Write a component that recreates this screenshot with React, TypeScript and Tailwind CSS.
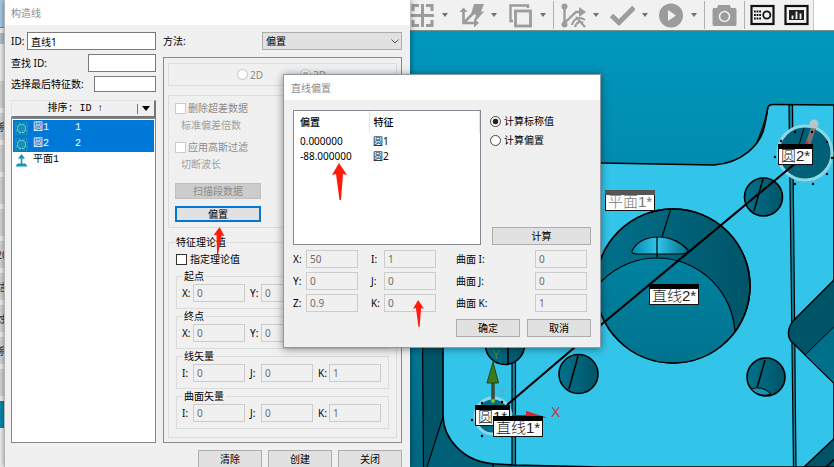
import { useState } from "react";
import type { ReactNode } from "react";

const INPUT =
  "min-w-0 border border-[#7a7a7a] bg-white px-[3px] text-black outline-none";
const DISABLED_INPUT =
  "h-[18px] w-full min-w-0 flex-1 border border-[#cccccc] bg-[#f0f0f0] px-[3px] text-[#6d6d6d] outline-none";
const BUTTON =
  "flex h-[18px] items-center justify-center border border-[#adadad] bg-[#e1e1e1]";
const RADIO =
  "size-[11px] shrink-0 appearance-none rounded-full border border-[#444444] bg-white checked:bg-[radial-gradient(circle,#222222_40%,#ffffff_50%)] disabled:border-[#c4c4c4] disabled:checked:bg-[radial-gradient(circle,#c0c0c0_40%,#ffffff_50%)]";
const CHECKBOX =
  "size-[11px] shrink-0 appearance-none border border-[#333333] bg-white checked:bg-[#0078d7] disabled:border-[#cccccc]";

interface FieldProps {
  id: string;
  label: string;
  value: string;
}

function AxisField({ id, label, value }: FieldProps) {
  return (
    <div className="flex min-w-0 flex-1 items-center">
      <label htmlFor={id} className="w-[11px] shrink-0">
        {label}
      </label>
      <input id={id} className={DISABLED_INPUT} defaultValue={value} disabled />
    </div>
  );
}

interface VectorGroupProps {
  name: string;
  title: string;
  fields: [string, string][];
}

function VectorGroup({ name, title, fields }: VectorGroupProps) {
  return (
    <fieldset className="min-w-0 border border-[#dcdcdc] pt-px pr-[7px] pb-[6px] pl-[5px]">
      <legend className="h-[14px] px-[2px]">{title}</legend>
      <div className="flex gap-[5px]">
        {fields.map(([label, value]) => (
          <AxisField
            key={label}
            id={`${name}-${label}`}
            label={`${label}:`}
            value={value}
          />
        ))}
      </div>
    </fieldset>
  );
}

function CircleIcon() {
  return (
    <svg viewBox="0 0 13 13" className="size-[13px] shrink-0">
      <rect width="13" height="13" fill="#1590b8" />
      <circle cx="6.5" cy="6.5" r="4.3" fill="none" stroke="#7fd0e8" />
      <path
        d="M2 2h1M6 1h1M10 2h1M1 6h1M11 6h1M2 11h1M6 11.5h1M10 11h1"
        stroke="#0b3f66"
      />
    </svg>
  );
}

function PlaneIcon() {
  return (
    <svg viewBox="0 0 13 13" className="size-[13px] shrink-0">
      <path d="M6.5 11V3" stroke="#1793b8" strokeWidth="1.6" />
      <path d="M6.5 0L10 4.5H3Z" fill="#1793b8" />
      <path d="M2.5 9.5L0.5 12.5H12.5L10.5 9.5Z" fill="#1793b8" />
    </svg>
  );
}

const features = [
  { name: "圆1", order: "1", kind: "circle" },
  { name: "圆2", order: "2", kind: "circle" },
  { name: "平面1", order: "", kind: "plane" },
];

function FeatureList() {
  const [selected, setSelected] = useState(["圆1", "圆2"]);

  const toggle = (name: string) => {
    setSelected((prev) =>
      prev.includes(name) ? prev.filter((n) => n !== name) : [...prev, name],
    );
  };

  return (
    <div className="mt-2 flex flex-1 flex-col font-['Liberation_Mono','Noto_Sans_CJK_SC',monospace]">
      <div className="flex h-[18px] items-center border-t border-r-2 border-b-2 border-l border-t-[#e3e3e3] border-r-[#777777] border-b-[#777777] border-l-[#e3e3e3]">
        <button type="button" className="flex-1 pl-[2px] text-center">
          排序: ID ↑
        </button>
        <button
          type="button"
          aria-label="排序方式"
          className="flex h-[10px] w-[17px] items-center justify-center border-l border-[#777777]"
        >
          <svg viewBox="0 0 8 5" className="h-[5px] w-2">
            <path d="M0 0H8L4 5Z" fill="#000" />
          </svg>
        </button>
      </div>
      <ul className="flex-1 border border-[#828790] bg-white p-px">
        {features.map((f) => (
          <li key={f.name}>
            <button
              type="button"
              onClick={() => toggle(f.name)}
              className={`flex h-4 w-full items-center pl-[2px] text-left ${
                selected.includes(f.name) ? "bg-[#0078d7] text-white" : ""
              }`}
            >
              {f.kind === "circle" ? <CircleIcon /> : <PlaneIcon />}
              <span className="ml-[5px] w-[42px]">{f.name}</span>
              <span>{f.order}</span>
            </button>
          </li>
        ))}
      </ul>
    </div>
  );
}

function ConstructLineWindow() {
  return (
    <section className="z-10 flex w-[406px] shrink-0 flex-col border-l border-[#b5b5b5] bg-[#f0f0f0] shadow-[0_0_6px_rgba(0,0,0,0.5)]">
      <h1 className="flex h-[25px] shrink-0 items-center bg-white pl-[6px] text-[#8c8c8c]">
        构造线
      </h1>
      <div className="flex gap-[7px] pt-[7px] pr-2 pl-[6px]">
        <div className="flex w-[145px] shrink-0 flex-col">
          <div className="flex flex-col gap-1">
            <div className="flex items-center">
              <label htmlFor="line-id" className="w-4">
                ID:
              </label>
              <input
                id="line-id"
                className={`${INPUT} h-[18px] flex-1`}
                defaultValue="直线1"
              />
            </div>
            <div className="flex items-center justify-between">
              <label htmlFor="find-id">查找 ID:</label>
              <input id="find-id" className={`${INPUT} h-[18px] w-[68px]`} />
            </div>
            <div className="flex items-center justify-between">
              <label htmlFor="last-count">选择最后特征数:</label>
              <input id="last-count" className={`${INPUT} h-4 w-[62px]`} />
            </div>
          </div>
          <FeatureList />
        </div>

        <div className="flex min-w-0 flex-1 flex-col">
          <div className="flex items-center justify-between">
            <label htmlFor="method">方法:</label>
            <div className="relative w-[140px]">
              <select
                id="method"
                className="block h-[18px] w-full appearance-none border border-[#adadad] bg-[#e1e1e1] px-[3px]"
              >
                <option>偏置</option>
              </select>
              <svg
                viewBox="0 0 8 5"
                className="pointer-events-none absolute top-[7px] right-[3px] h-[5px] w-2"
              >
                <path d="M0.5 0.5L4 4L7.5 0.5" fill="none" stroke="#555" />
              </svg>
            </div>
          </div>

          <div className="mt-[7px] border border-[#8a8a8a] px-1 pt-[5px] pb-1">
            <div className="flex h-[23px] items-center border border-[#dcdcdc] pl-[68px] text-[#8c8c8c]">
              <label className="flex w-[63px] items-center gap-[2px]">
                <input type="radio" name="dim" className={RADIO} disabled />
                2D
              </label>
              <label className="flex items-center gap-[2px]">
                <input
                  type="radio"
                  name="dim"
                  className={RADIO}
                  defaultChecked
                  disabled
                />
                3D
              </label>
            </div>

            <div className="mt-[9px] border border-[#dcdcdc] px-[6px] pt-[5px] pb-[5px] text-[#8c8c8c]">
              <label className="flex h-[14px] items-center gap-[2px]">
                <input type="checkbox" className={CHECKBOX} disabled />
                删除超差数据
              </label>
              <p className="mt-[3px] pl-[6px] text-[#a0a0a0]">标准偏差倍数</p>
              <label className="mt-2 flex h-[14px] items-center gap-[2px]">
                <input type="checkbox" className={CHECKBOX} disabled />
                应用高斯过滤
              </label>
              <p className="mt-[3px] pl-[6px] text-[#a0a0a0]">切断波长</p>
              <button
                type="button"
                disabled
                className="mt-3 flex h-4 w-[86px] items-center justify-center border border-[#bfbfbf] bg-[#cccccc] text-[#8c8c8c]"
              >
                扫描段数据
              </button>
              <button
                type="button"
                className="mt-[7px] flex h-4 w-[86px] items-center justify-center border-2 border-[#0078d7] bg-[#e1e1e1] text-black"
              >
                偏置
              </button>
            </div>

            <fieldset className="mt-[7px] min-w-0 border border-[#dcdcdc] px-[7px] pt-[3px] pb-2">
              <legend className="h-[14px]">特征理论值</legend>
              <label className="mb-[3px] flex h-[14px] items-center gap-[3px]">
                <input type="checkbox" className={CHECKBOX} />
                指定理论值
              </label>
              <VectorGroup
                name="start"
                title="起点"
                fields={[["X", "0"], ["Y", "0"], ["Z", "0"]]}
              />
              <VectorGroup
                name="end"
                title="终点"
                fields={[["X", "0"], ["Y", "0"], ["Z", "0"]]}
              />
              <VectorGroup
                name="line"
                title="线矢量"
                fields={[["I", "0"], ["J", "0"], ["K", "1"]]}
              />
              <VectorGroup
                name="surface"
                title="曲面矢量"
                fields={[["I", "0"], ["J", "0"], ["K", "1"]]}
              />
            </fieldset>
          </div>
        </div>
      </div>
      <div className="mt-[7px] flex shrink-0 justify-end gap-[6px] pr-2">
        {["清除", "创建", "关闭"].map((text) => (
          <button key={text} type="button" className={`${BUTTON} w-16`}>
            {text}
          </button>
        ))}
      </div>
    </section>
  );
}

const offsets = [
  { offset: "0.000000", feature: "圆1" },
  { offset: "-88.000000", feature: "圆2" },
];

const nominal = [
  [["X", "50"], ["I", "1"], ["曲面 I", "0"]],
  [["Y", "0"], ["J", "0"], ["曲面 J", "0"]],
  [["Z", "0.9"], ["K", "0"], ["曲面 K", "1"]],
];

function LineOffsetDialog() {
  const [mode, setMode] = useState("nominal");

  return (
    <section
      role="dialog"
      aria-labelledby="offset-title"
      className="absolute top-[74px] left-[283px] z-20 w-[318px] border border-[#8f9ba3] bg-[#f0f0f0] shadow-[0_1px_8px_rgba(0,0,0,0.45)]"
    >
      <h2
        id="offset-title"
        className="flex h-[25px] items-center bg-white pl-[7px] text-[#8c8c8c]"
      >
        直线偏置
      </h2>
      <div className="px-[9px] pt-[10px] pb-[10px]">
        <div className="flex gap-[9px]">
          <div className="h-[135px] w-[188px] border border-[#828790] bg-white">
            <table className="w-full table-fixed border-collapse text-left">
              <thead>
                <tr className="h-[22px]">
                  <th className="w-[75px] border-r border-[#e5e5e5] pl-[6px] font-medium">
                    偏置
                  </th>
                  <th className="border-r border-[#e5e5e5] pl-[4px] font-medium">
                    特征
                  </th>
                </tr>
              </thead>
              <tbody>
                {offsets.map((row) => (
                  <tr key={row.feature} className="h-[15px]">
                    <td className="pl-[6px]">{row.offset}</td>
                    <td className="pl-[4px]">{row.feature}</td>
                  </tr>
                ))}
              </tbody>
            </table>
          </div>
          <div className="flex flex-1 flex-col pt-1">
            <label className="flex h-[14px] items-center gap-[3px]">
              <input
                type="radio"
                name="mode"
                className={RADIO}
                checked={mode === "nominal"}
                onChange={() => setMode("nominal")}
              />
              计算标称值
            </label>
            <label className="mt-[5px] flex h-[14px] items-center gap-[3px]">
              <input
                type="radio"
                name="mode"
                className={RADIO}
                checked={mode === "offset"}
                onChange={() => setMode("offset")}
              />
              计算偏置
            </label>
            <button type="button" className={`${BUTTON} mt-auto ml-[2px]`}>
              计算
            </button>
          </div>
        </div>

        <div className="mt-[5px] flex flex-col gap-1">
          {nominal.map((row) => (
            <div key={row[0][0]} className="grid grid-cols-[78px_85px_131px]">
              {row.map(([label, value]) => (
                <div key={label} className="flex items-center">
                  <label
                    htmlFor={`nominal-${label}`}
                    className={label.length > 1 ? "w-[79px]" : "w-[13px]"}
                  >
                    {label}:
                  </label>
                  <div className="flex w-[52px]">
                    <input
                      id={`nominal-${label}`}
                      className={DISABLED_INPUT}
                      defaultValue={value}
                      disabled
                    />
                  </div>
                </div>
              ))}
            </div>
          ))}
        </div>

        <div className="mt-[7px] flex justify-end gap-[7px]">
          <button type="button" className={`${BUTTON} w-16`}>
            确定
          </button>
          <button type="button" className={`${BUTTON} w-16`}>
            取消
          </button>
        </div>
      </div>
    </section>
  );
}

function Tool({
  label,
  menu,
  children,
}: {
  label: string;
  menu?: boolean;
  children: ReactNode;
}) {
  return (
    <button type="button" aria-label={label} className="flex shrink-0 items-center">
      <svg viewBox="0 0 25 25" className="size-[25px]" fill="none" stroke="#9c9c9c">
        {children}
      </svg>
      {menu && (
        <span className="flex w-5 justify-center">
          <svg viewBox="0 0 6 4" className="h-1 w-[6px]">
            <path d="M0 0H6L3 4Z" fill="#707070" />
          </svg>
        </span>
      )}
    </button>
  );
}

function Separator() {
  return <span className="h-7 w-px shrink-0 bg-[#b0b0b0]" />;
}

function Toolbar() {
  return (
    <div className="flex h-[31px] shrink-0 border-b border-[#7d8a8e] bg-white">
      <div className="flex items-center border-r border-[#c8c8c8] bg-[#f1f1f1] pr-[4px]">
        <div className="flex gap-1">
          <Tool label="对齐" menu>
            <path d="M12.5 1V24M1 12.5H24" strokeWidth="3" />
            <path
              d="M3 8V2.5H9M16 2.5H22V8M3 17V22.5H9M16 22.5H22V17"
              strokeWidth="3"
            />
          </Tool>
          <Tool label="自动特征" menu>
            <path d="M4.5 6V20H18M4.5 20L15 9.5" strokeWidth="2.6" />
            <path d="M0.5 9L4.5 4.5L8.5 9ZM15 15.5L20 20L15 24.5Z" fill="#9c9c9c" stroke="none" />
            <path d="M15 1H25L22 8.5H25L15 20L17 11.5H12Z" fill="#9c9c9c" stroke="none" />
          </Tool>
          <Tool label="复制" menu>
            <path d="M5 18H2.5V2.5H20V5" strokeWidth="2.4" />
            <rect x="7.5" y="8" width="15" height="15" strokeWidth="2.8" />
          </Tool>
        </div>
        <Separator />
        <div className="ml-[7px] flex gap-1">
          <Tool label="坐标系" menu>
            <path d="M3.5 3V22M3.5 20L15 9H19" strokeWidth="2.4" />
            <circle cx="3.5" cy="3.5" r="3" fill="#9c9c9c" stroke="none" />
            <circle cx="3.5" cy="21.5" r="3" fill="#9c9c9c" stroke="none" />
            <path d="M18 4L25 9L18 14Z" fill="#9c9c9c" stroke="none" />
            <path d="M11 22C13 14 20 14 24 17M14 24C16 18 20 18 22 20M15 14L24 24" strokeWidth="2" />
          </Tool>
          <Tool label="确认" menu>
            <path d="M1.5 12.5L9 19.5L24 4.5" strokeWidth="5" />
          </Tool>
          <Tool label="执行" menu>
            <circle cx="12" cy="12.5" r="12" fill="#9c9c9c" stroke="none" />
            <path d="M9 7L17 12.5L9 18Z" fill="#f1f1f1" stroke="none" />
          </Tool>
        </div>
        <Separator />
        <div className="mx-[7px] flex">
          <Tool label="截图">
            <path
              d="M2 5H5L6 2H18L19 5H23Q24.5 5 24.5 7V21Q24.5 23 23 23H2Q0.5 23 0.5 21V7Q0.5 5 2 5Z"
              fill="#9c9c9c"
              stroke="none"
            />
            <circle cx="12.5" cy="13.5" r="5" stroke="#f1f1f1" strokeWidth="1.6" />
          </Tool>
        </div>
        <Separator />
        <div className="ml-[5px] flex gap-[9px]">
          <Tool label="测量窗口">
            <rect x="1.5" y="3" width="22" height="18" stroke="#111" strokeWidth="2.2" />
            <circle cx="16.8" cy="12" r="3.6" stroke="#111" strokeWidth="1.8" />
            <path
              d="M4 8.5H11M4 12H11M4 15.5H11"
              stroke="#111"
              strokeWidth="2"
              strokeDasharray="1.8 0.8"
            />
          </Tool>
          <Tool label="报告窗口">
            <rect x="1.5" y="3" width="22" height="18" stroke="#111" strokeWidth="2.2" />
            <rect x="5" y="7" width="15" height="10" fill="#222" stroke="none" />
            <path
              d="M8.5 16V12.5M12.5 16V8.5M16.5 16V10.5"
              stroke="#f1f1f1"
              strokeWidth="1.8"
            />
          </Tool>
        </div>
      </div>
    </div>
  );
}

interface TagProps {
  x: number;
  y: number;
  width: number;
  text: string;
  muted?: boolean;
}

function Tag({ x, y, width, text, muted }: TagProps) {
  return (
    <g transform={`translate(${x} ${y})`}>
      <rect x="0.5" y="0.5" width={width} height="20" fill="#fff" stroke="#111" />
      <rect width={width + 1} height="5" fill={muted ? "#555555" : "#000000"} />
      <text
        x={width / 2 + 0.5}
        y="17"
        textAnchor="middle"
        fontSize="15"
        fontWeight="300"
        fill={muted ? "#777777" : "#222222"}
      >
        {text}
      </text>
    </g>
  );
}

const ringDots = [
  [781, 141], [775, 157], [795, 132], [812, 132], [827, 142],
  [832, 158], [827, 174], [813, 184], [795, 184],
];

function Scene() {
  return (
    <svg
      viewBox="410 31 424 436"
      preserveAspectRatio="xMinYMin slice"
      className="min-h-0 w-full flex-1 font-['Liberation_Sans','Noto_Sans_CJK_SC',sans-serif]"
    >
      <defs>
        <linearGradient id="back" x1="0" y1="0" x2="0" y2="1">
          <stop offset="0" stopColor="#0098bc" />
          <stop offset="0.45" stopColor="#0086aa" />
          <stop offset="1" stopColor="#006780" />
        </linearGradient>
        <linearGradient id="bore" x1="0" y1="0" x2="0" y2="1">
          <stop offset="0" stopColor="#0082a0" />
          <stop offset="1" stopColor="#006c86" />
        </linearGradient>
        <linearGradient id="hole" x1="0" y1="0" x2="1" y2="0">
          <stop offset="0" stopColor="#00728c" />
          <stop offset="1" stopColor="#005468" />
        </linearGradient>
        <linearGradient id="lens" x1="0" y1="0" x2="1" y2="0">
          <stop offset="0" stopColor="#0088a8" />
          <stop offset="0.45" stopColor="#33c5e9" />
          <stop offset="1" stopColor="#00708a" />
        </linearGradient>
        <clipPath id="boreClip">
          <circle cx="673" cy="286" r="77" />
        </clipPath>
      </defs>

      <rect x="410" y="31" width="424" height="436" fill="url(#back)" />
      <path d="M422 340H443V417L427 467H423Z" fill="#005468" />
      <path d="M443 417L427 467H834V455H520Z" fill="#006078" />
      <path
        d="M443 163L601 163L714 165C742 163 760 145 764 128C767 117 767 108 768 107Q769 104.5 773 104.5L834 105V467H600L515 465L497 464C462 463 443 437 443 415Z"
        fill="#33c5e9"
        stroke="#000"
        strokeWidth="1.6"
      />
      <path d="M768 108C766 122 763 132 757 142C763 127 765 119 768 108Z" fill="#004a5c" stroke="#000" />
      <g stroke="#000" strokeWidth="1.2" fill="none">
        <path d="M422.5 340L423.5 467M443 417L427 467M493 464V467" />
        <path d="M789 105L793.5 467H796L792.5 105Z" fill="#1483a0" />
        <path d="M512 355V465H515.5V355Z" fill="#1483a0" />
      </g>

      <g stroke="#000" strokeWidth="1.5">
        <path d="M840 274L795 319C787 327 786 338 794 344L840 389Z" fill="#005468" />
        <path d="M840 321L805 355L840 389Z" fill="#00708a" strokeWidth="1" />
        <path d="M840 433L804 467H840Z" fill="#005468" />
        <path d="M840 454L826 467" />
      </g>

      <g stroke="#000" strokeWidth="1.6">
        <circle cx="673" cy="286" r="77" fill="url(#hole)" />
        <circle
          cx="657"
          cy="336"
          r="78"
          fill="url(#bore)"
          strokeWidth="1.2"
          clipPath="url(#boreClip)"
        />
        <circle cx="673" cy="286" r="77" fill="none" />
        <path
          d="M632 251C637 241 648 237 659 237C671 237 682 243 688 250Q688 254 680 254H638Q631 254 632 251Z"
          fill="url(#lens)"
          strokeWidth="1.2"
        />
        <path d="M657 237V258M670.5 210L662 237" strokeWidth="1.2" />
        <circle cx="763.5" cy="197" r="19" fill="url(#hole)" />
        <path d="M763 179L754 211" />
        <circle cx="766" cy="377" r="19" fill="url(#hole)" />
        <path d="M765 360L757 388" />
        <path d="M751 389Q762 385 771 394Q760 398 751 389Z" fill="#1a93b2" strokeWidth="1" />
        <circle cx="578.5" cy="374" r="19.5" fill="url(#hole)" />
        <path d="M578 356L569 389" />
        <circle cx="505" cy="345" r="19.5" fill="url(#hole)" />
        <path d="M508 340V364" />
      </g>

      <circle cx="805" cy="153" r="27" fill="#006078" stroke="#8fd6e2" strokeWidth="3" />
      <path d="M804 128L799 145" stroke="#000" />
      <path d="M814 126L808 144" stroke="#7c7474" strokeWidth="5" />
      <circle cx="814" cy="124" r="4.5" fill="#b8c6c9" />
      <circle cx="807" cy="143" r="1.5" fill="#d8222a" />
      {ringDots.map(([cx, cy]) => (
        <circle key={`${cx}-${cy}`} cx={cx} cy={cy} r="1.2" fill="#000" />
      ))}

      <circle cx="493" cy="416" r="18" fill="#006f88" stroke="#8fd6e2" strokeWidth="3" />
      <g fill="#000">
        <circle cx="472" cy="420" r="1.2" />
        <circle cx="482" cy="436" r="1.2" />
        <circle cx="502" cy="436" r="1.2" />
        <circle cx="482" cy="403" r="1.2" />
        <circle cx="502" cy="402" r="1.2" />
      </g>

      <path d="M797 162L602 324L507 405" stroke="#000" strokeWidth="2.2" fill="none" />

      <path d="M493 403V382" stroke="#3d4a32" strokeWidth="3.5" />
      <path d="M493 362L487 383H498.5Z" fill="#3d7a1e" stroke="#22441a" />
      <circle cx="493" cy="401" r="2" fill="#6fc832" />
      <text x="492" y="359" fontSize="12" fill="#4a8c2a">
        Y
      </text>
      <text x="500" y="396" fontSize="9" fill="#4fa5cc">
        Z
      </text>
      <path d="M512 416H528" stroke="#8c2233" strokeWidth="2" />
      <path d="M526 411L547 417.5L526 420Z" fill="#e0202a" />
      <text x="551" y="417" fontSize="14" fill="#d0303e">
        X
      </text>

      <Tag x={778} y={144} width={34} text="圆2*" />
      <Tag x={605} y={190} width={49} text="平面1*" muted />
      <Tag x={649} y={284} width={49} text="直线2*" />
      <Tag x={475} y={405} width={34} text="圆1*" />
      <Tag x={493} y={416} width={49} text="直线1*" />
    </svg>
  );
}

// sliver of the parent application left of the window
function SideStrip() {
  return (
    <div className="flex w-1 shrink-0 flex-col gap-[5px] overflow-hidden bg-[#f4f4f4] text-[#333333]">
      <div className="h-7 shrink-0 border-b border-[#7a8ea0] bg-[#a9cdee]" />
      <div className="h-[11px] shrink-0 bg-[#b4c4d4]" />
      <div className="h-[27px] shrink-0" />
      {["", "系", "", "", "", "20", "信", "蚀", "系", ""].map((text, i) => (
        <div
          key={i}
          className="flex h-[27px] shrink-0 items-center justify-center bg-[#dadada]"
        >
          {text}
        </div>
      ))}
      <div className="h-[27px] shrink-0 bg-[#008cb0]" />
    </div>
  );
}

function RedArrow({ className }: { className: string }) {
  return (
    <svg
      viewBox="0 0 15 37"
      preserveAspectRatio="none"
      className={`pointer-events-none absolute z-30 ${className}`}
    >
      <path d="M7 0L15 12L11 11L9 37H7.5L4 11L0 12Z" fill="#ff1a0a" />
    </svg>
  );
}

export default function App() {
  return (
    <main className="relative flex h-screen overflow-hidden bg-[#f0f0f0] font-['Noto_Sans','Noto_Sans_CJK_SC',sans-serif] text-[10px] leading-[14px] text-black">
      <SideStrip />
      <ConstructLineWindow />
      <div className="flex min-w-0 flex-1 flex-col">
        <Toolbar />
        <Scene />
      </div>
      <LineOffsetDialog />
      <RedArrow className="top-[163px] left-[332px] h-[37px] w-[15px]" />
      <RedArrow className="top-[227px] left-[213px] h-[27px] w-[11px] rotate-6" />
      <RedArrow className="top-[300px] left-[413px] h-[27px] w-[11px]" />
    </main>
  );
}
